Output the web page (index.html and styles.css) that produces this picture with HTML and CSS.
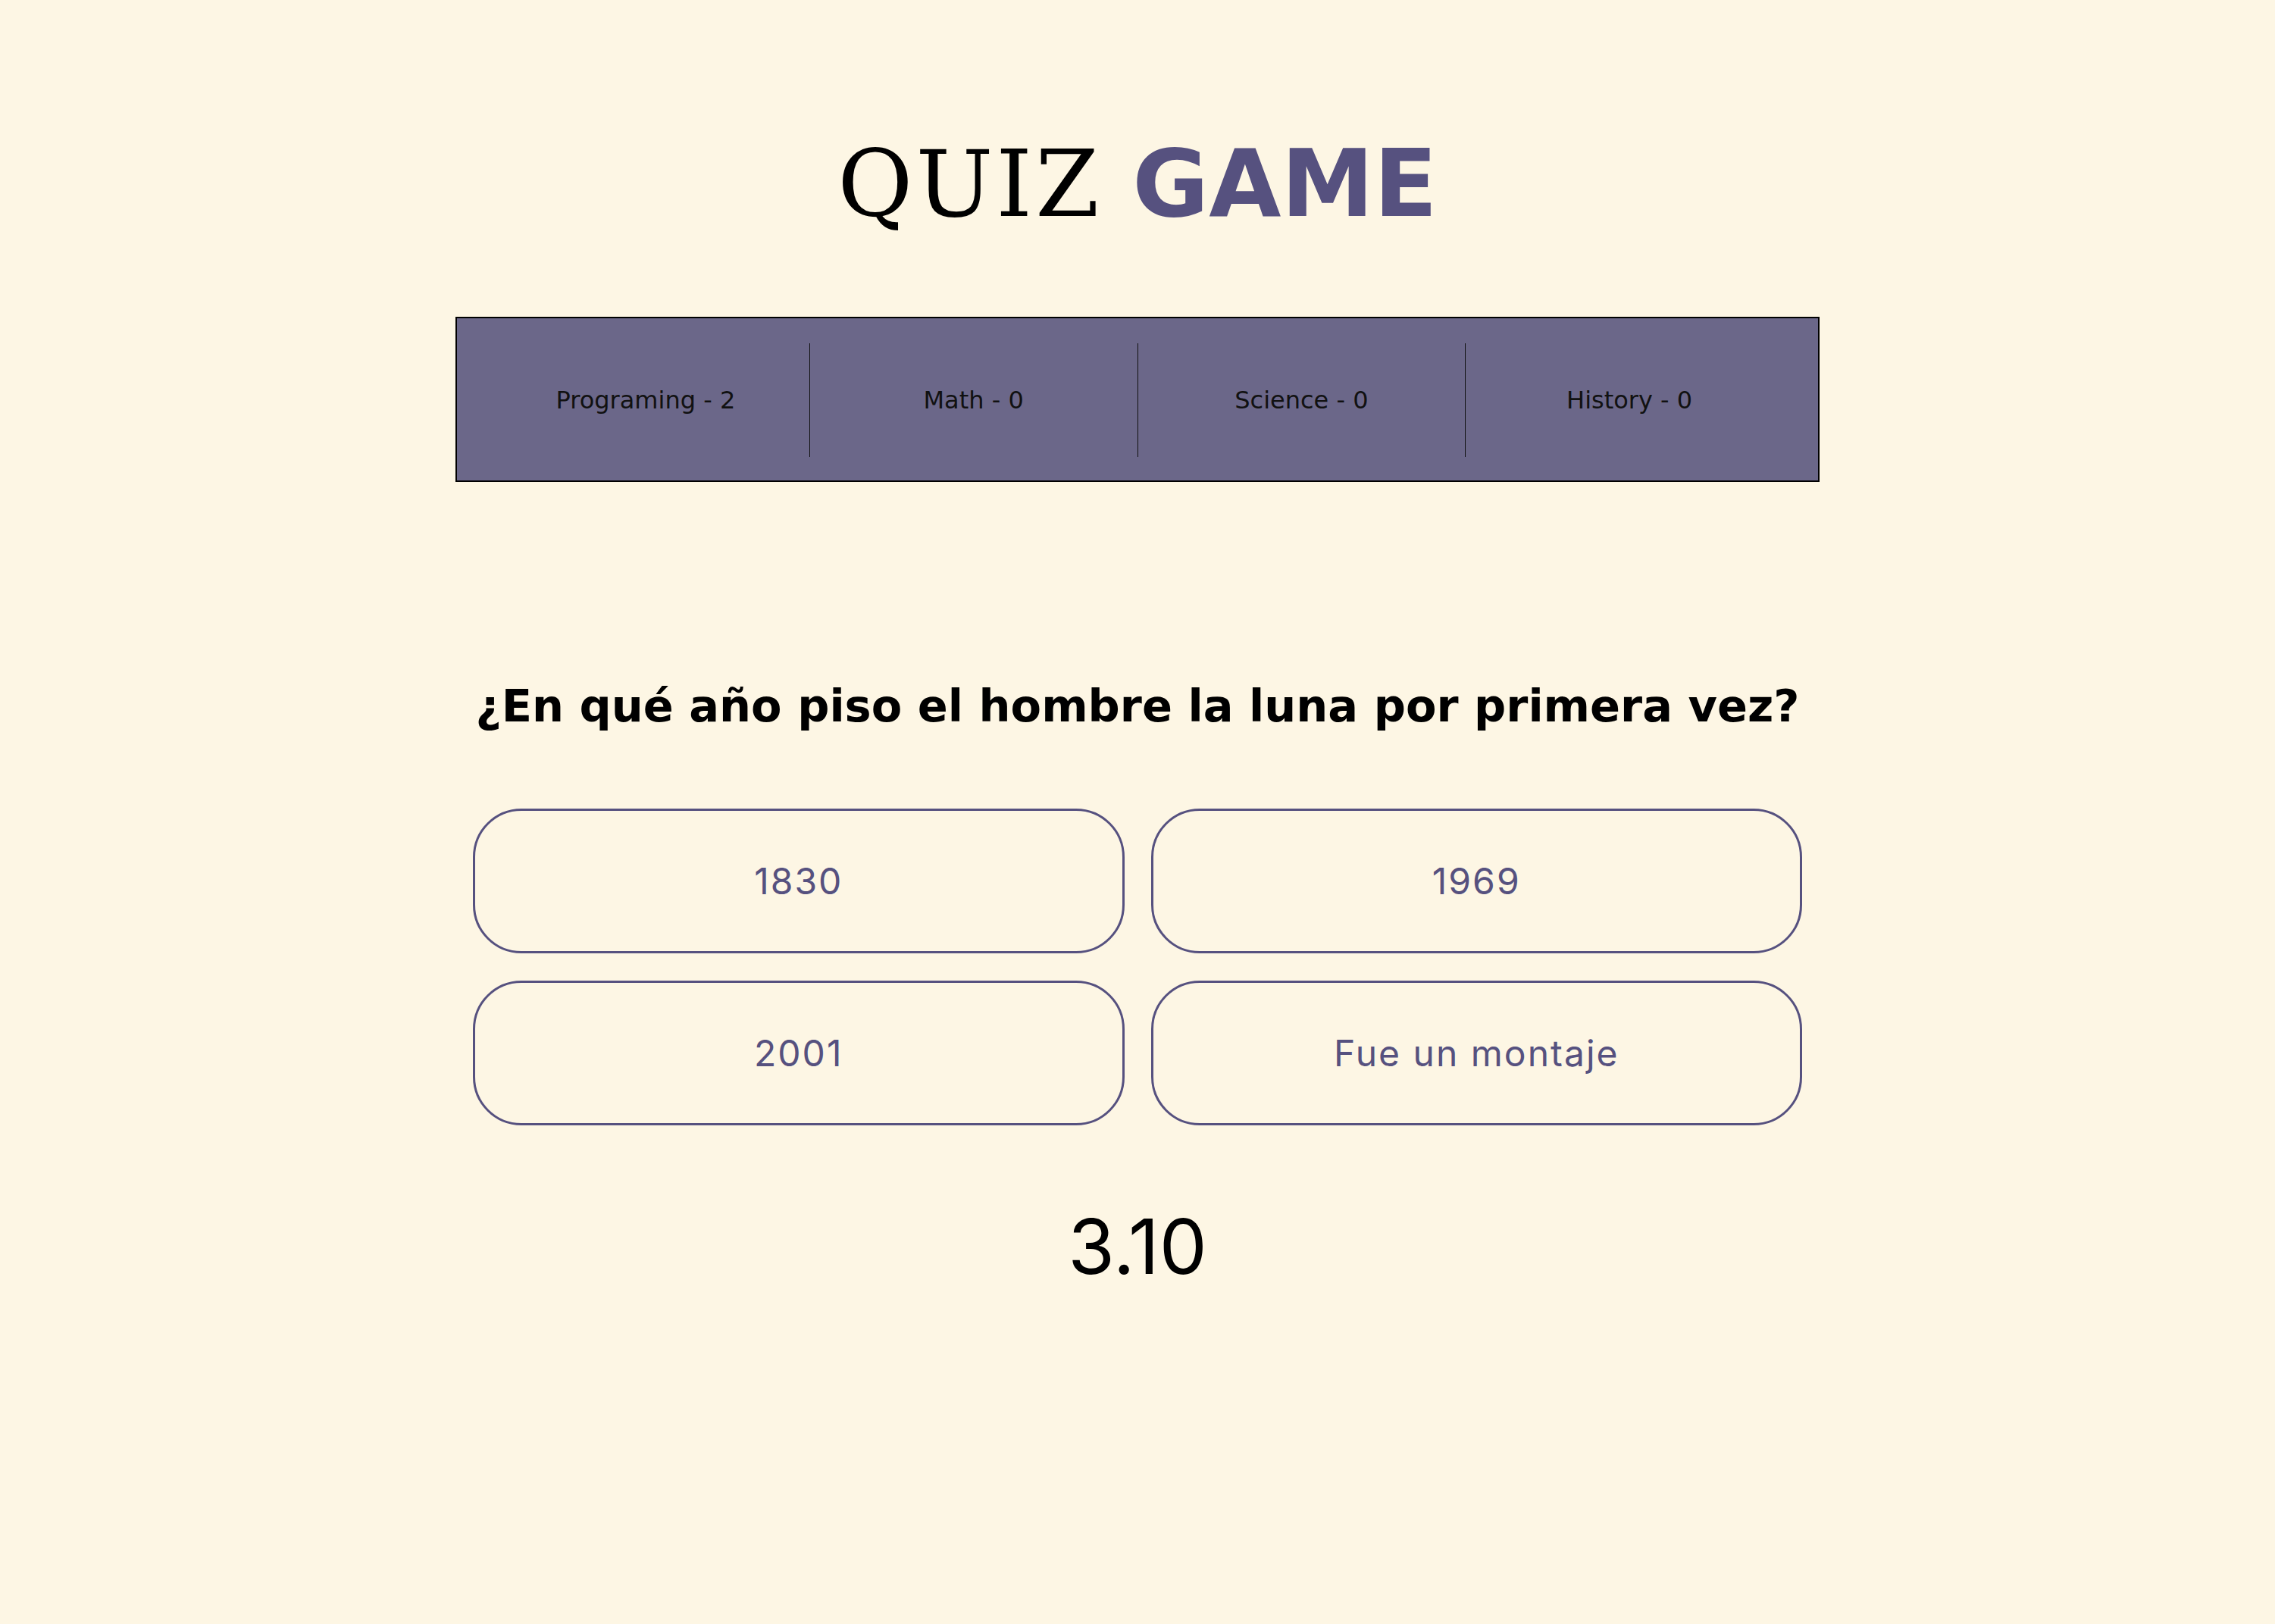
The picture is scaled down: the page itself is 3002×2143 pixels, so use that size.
FILE: index.html
```html
<!DOCTYPE html>
<html lang="es">
<head>
<meta charset="utf-8">
<title>Quiz Game</title>
<link rel="stylesheet" href="styles.css">
</head>
<body>
<main class="page">
  <h1 class="title"><span class="title-quiz">QUIZ</span><span class="title-game">GAME</span></h1>
  <nav class="categories">
    <ul class="cat-list">
      <li class="cat">Programing - 2</li>
      <li class="cat">Math - 0</li>
      <li class="cat">Science - 0</li>
      <li class="cat">History - 0</li>
    </ul>
  </nav>
  <section class="quiz">
    <h2 class="question">¿En qué año piso el hombre la luna por primera vez?</h2>
    <div class="answers">
      <button class="answer">1830</button>
      <button class="answer">1969</button>
      <button class="answer">2001</button>
      <button class="answer">Fue un montaje</button>
    </div>
    <p class="timer">3.10</p>
  </section>
</main>
</body>
</html>
```
FILE: styles.css
```css
html, body {
  margin: 0;
  padding: 0;
  background: #fdf6e4;
}
body {
  font-family: "DejaVu Sans", sans-serif;
  color: #000;
}
.page {
  display: flex;
  flex-direction: column;
  align-items: center;
  min-height: 2143px;
}
.title {
  margin: 181px 0 0;
  line-height: 1;
  font-weight: normal;
  white-space: nowrap;
  display: flex;
  align-items: baseline;
  gap: 40px;
}
.title-quiz {
  font-family: "DejaVu Serif", serif;
  font-size: 121px;
  letter-spacing: 4px;
  color: #000;
}
.title-game {
  font-family: "DejaVu Sans", sans-serif;
  font-weight: 700;
  font-size: 123px;
  color: #56517f;
}
.categories {
  box-sizing: border-box;
  width: 1800px;
  margin-top: 114px;
  border: 2px solid #000;
  background: #6b6789;
  padding: 33px 33px 31px;
}
.cat-list {
  list-style: none;
  margin: 0;
  padding: 0;
  display: flex;
}
.cat {
  flex: 1;
  height: 150px;
  display: flex;
  align-items: center;
  justify-content: center;
  font-size: 32px;
  color: #111;
}
.cat + .cat {
  border-left: 1px solid #111;
}
.quiz {
  display: flex;
  flex-direction: column;
  align-items: center;
  margin-top: 261px;
}
.question {
  margin: 0;
  font-size: 59px;
  font-weight: 700;
  line-height: 1.2;
}
.answers {
  margin-top: 99px;
  width: 1754px;
  display: grid;
  grid-template-columns: 1fr 1fr;
  gap: 36px 35px;
}
.answer {
  box-sizing: border-box;
  height: 191px;
  border: 3px solid #56517f;
  border-radius: 64px;
  background: transparent;
  color: #56517f;
  font-family: Inter, sans-serif;
  font-size: 48px;
  letter-spacing: 2px;
  padding: 0;
}
.timer {
  margin: 110px 0 0;
  font-family: Inter, sans-serif;
  font-size: 100px;
  line-height: 1;
}
```
